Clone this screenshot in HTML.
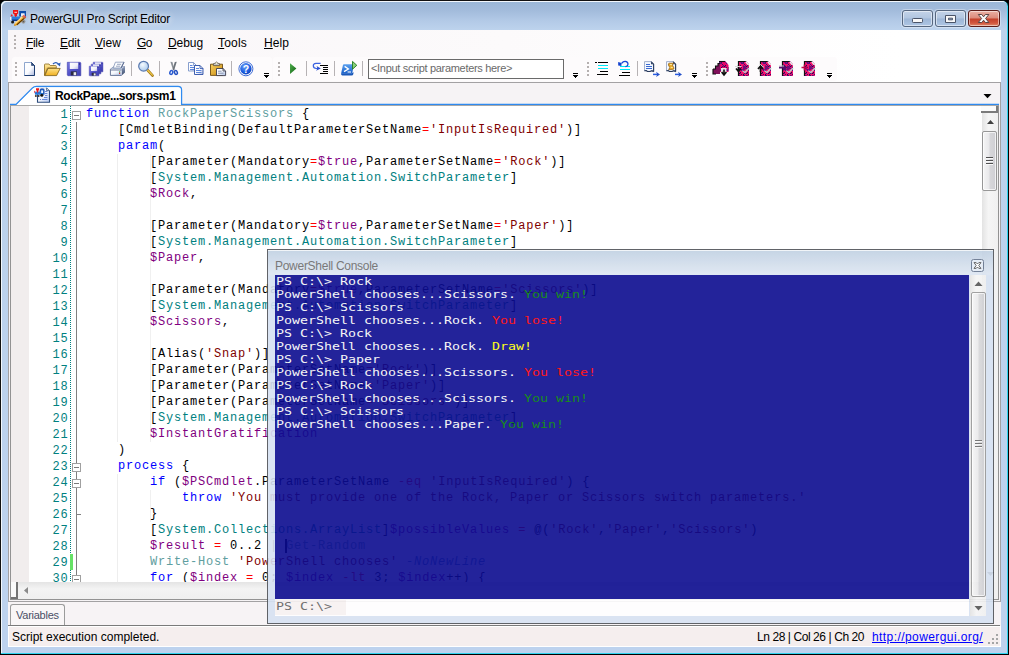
<!DOCTYPE html>
<html><head><meta charset="utf-8"><title>PowerGUI Pro Script Editor</title>
<style>
html,body{margin:0;padding:0;}
body{width:1009px;height:655px;overflow:hidden;position:relative;background:#000;font-family:"Liberation Sans",sans-serif;font-size:12px;color:#000;}
.abs,.abs2>div{position:absolute;}
svg{position:absolute;overflow:visible;}
#winc{position:absolute;left:0;top:0;width:1008px;height:654px;background:#2fd3ee;border-radius:6px 6px 0 0;border-left:1px solid #111;border-top:1px solid #111;box-sizing:border-box;}
#win{position:absolute;left:1px;top:1px;width:1006px;height:652px;border-radius:5px 5px 0 0;background:linear-gradient(#9ab7d7 0px,#a3bcdc 10px,#b3cae7 20px,#bdd3ed 29px,#bcd2ec 60px,#bdd2ee 100%);box-shadow:inset 1px 1px 0 #f2f7fc;}
#title{left:30px;top:11px;text-shadow:0 0 6px rgba(255,255,255,.9),0 0 10px rgba(255,255,255,.6);font-size:12px;line-height:16px;white-space:nowrap;letter-spacing:-0.23px;}
.wb{position:absolute;top:10px;height:15px;border:1px solid #56677f;border-radius:3px;box-shadow:inset 0 0 0 1px rgba(255,255,255,.5),0 0 0 1px rgba(255,255,255,.35);background:linear-gradient(#c3d3e8 0%,#b1c6e0 48%,#9db6d6 52%,#aec6e4 100%);}
#client{left:8px;top:30px;width:993px;height:617px;background:#f7f3f5;}
#mbg{left:8px;top:30px;width:993px;height:52px;background:linear-gradient(90deg,#f9f6f8 0,#fcfafb 50%,#ffffff 90%);}
.menu{position:absolute;top:35px;font-size:12px;line-height:16px;white-space:nowrap;}
.tb{position:absolute;top:57px;height:24px;background:#fdfbfc;border-radius:3px;}
.grip{position:absolute;width:2px;height:18px;background:repeating-linear-gradient(#b5b0b0 0 2px,transparent 2px 4px);}
.sep{position:absolute;top:61px;width:1px;height:15px;background:#b6b2b4;}
.ovf{position:absolute;width:5px;height:1px;background:#000;}
.ovf:after{content:"";position:absolute;left:2px;top:4px;width:1px;height:1px;background:#000;box-shadow:-1px -1px 0 #000,0 -1px 0 #000,1px -1px 0 #000,-2px -2px 0 #000,-1px -2px 0 #000,0 -2px 0 #000,1px -2px 0 #000,2px -2px 0 #000;}
#code{left:86px;top:106px;font-family:"Liberation Mono",monospace;font-size:12px;letter-spacing:0.8px;line-height:16px;white-space:pre;color:#000;}
#nums{left:36px;top:107px;width:32.5px;text-align:right;font-family:"Liberation Mono",monospace;font-size:12px;letter-spacing:0.8px;line-height:16px;color:#008080;white-space:pre;}
.k{color:#0000ff}.t{color:#008080}.f{color:#5f9ea0}.v{color:#800080}.s{color:#800000}.o{color:#ff0000}.p{color:#4682b4;font-style:italic}
.fold{position:absolute;left:72px;width:7px;height:7px;border:1px solid #a0a0a0;background:#fff;}
.fold:after{content:"";position:absolute;left:1px;top:3px;width:5px;height:1px;background:#7a7a7a;}
#con{left:267px;top:249px;width:725px;height:373px;border:1px solid #505358;box-shadow:inset 0 1px 0 rgba(255,255,255,.75);background:linear-gradient(#c0d0e2 0px,#dde6f2 24px,#d7e2f2 26px,#d7e2f2 100%);opacity:0.9;}
#context{left:8px;top:25px;font-family:"DejaVu Sans Mono",monospace;font-size:11px;line-height:13px;white-space:pre;color:#f0f0f0;transform:scaleX(1.208);transform-origin:0 0;}
.cw{color:#f6f6f6}.cg{color:#008000}.cr{color:#ff0000}.cy{color:#ffff00}
.sbtrack{background:linear-gradient(90deg,#e3e3e3,#f5f5f5 40%,#f0f0f0);}
.thumb{border:1px solid #979797;border-radius:2px;background:linear-gradient(90deg,#f5f5f5 0%,#e9e9eb 45%,#d6d6d9 55%,#cfcfd3 100%);box-shadow:inset 0 0 0 1px rgba(255,255,255,.7);}
</style></head><body>
<div id="winc"></div><div id="win"></div>
<svg style="left:6px;top:6px" width="26" height="24" viewBox="6 6 26 24">
<path d="M19.2 11 H26 V18 H24.5 V13.4 H21 V16.4 H19.2 Z" fill="#0c4cac"/>
<path d="M21 13.4 H24.5 V16 H21 Z" fill="#e8f0fa"/>
<path d="M10.8 16.4 H20 V20.4 H12 L10.8 19.4 Z" fill="#2c7cd8"/>
<path d="M11.4 19.4 H19 V21 H13 Z" fill="#0a3694"/>
<path d="M10 17 H11.5 V20 H10 Z" fill="#f0f0f0"/>
<path d="M10.4 16.2 L11.8 13.8 L13 16.2 Z" fill="#e02030"/>
<path d="M13 10 H18.1 V13.4 L17 14.2 V15.8 L15.6 17 L14.4 15.8 V14.2 L13 13.4 Z" fill="#ee1414"/>
<path d="M14.4 11.8 H17 V12.8 H14.4 Z" fill="#ffd8d8"/>
<circle cx="12.6" cy="22" r="1.5" fill="#1c1c1c"/>
<circle cx="23.4" cy="21.6" r="2.1" fill="#9a9a9a"/><circle cx="23.4" cy="21.6" r="0.9" fill="#5a5a5a"/>
<path d="M14.2 25.8 L14.9 22.9 L23.6 14.9 L26 17.4 L17.2 25.3 Z" fill="#f4b030"/>
<path d="M14.9 22.9 L23.6 14.9 L24.4 15.7 L15.6 23.7 Z" fill="#ffe098"/>
<path d="M16.3 24.5 L25.2 16.5 L26 17.4 L17.2 25.3 Z" fill="#5a3400"/>
<path d="M22.6 15.9 L23.9 14.7 L26.2 17.1 L25 18.3 Z" fill="#e85858"/>
<path d="M21.8 16.6 L22.6 15.9 L25 18.3 L24.2 19 Z" fill="#c08040"/>
<path d="M14.2 25.8 L14.6 24 L15.9 25.4 Z" fill="#c87800"/>
</svg>
<div id="title" class="abs">PowerGUI Pro Script Editor</div>
<!-- window buttons -->
<div class="wb" style="left:902px;width:29px;"></div>
<div class="wb" style="left:935px;width:29px;"></div>
<div class="wb" style="left:968px;width:30px;border-color:#5c1c18;background:linear-gradient(#eab0a4 0%,#dc8a7a 48%,#c4402a 52%,#d2563e 80%,#e08a6a 100%);"></div>
<svg style="left:900px;top:8px" width="102" height="22" viewBox="900 8 102 22">
<rect x="912.5" y="18.5" width="10" height="4" rx="0.8" fill="#f8f8f8" stroke="#4a5468" stroke-width="1"/>
<path d="M945.5 15.5 H955.5 V22.5 H945.5 Z M948.5 18.2 V19.8 H952.5 V18.2 Z" fill="#f8f8f8" fill-rule="evenodd" stroke="#4a5468" stroke-width="1"/>
<path d="M978.3 14.5 H981.8 L983.6 16.8 L985.4 14.5 H988.9 L985.6 18.5 L988.9 22.5 H985.4 L983.6 20.2 L981.8 22.5 H978.3 L981.6 18.5 Z" fill="#f8f8f8" stroke="#5a4444" stroke-width="1"/>
</svg>

<div id="client" class="abs"></div><div id="mbg" class="abs"></div>
<!-- menubar -->
<div class="grip" style="left:14px;top:35px;height:16px"></div>
<div class="menu" style="left:26px;letter-spacing:-0.34px"><u>F</u>ile</div>
<div class="menu" style="left:60px;letter-spacing:-0.17px"><u>E</u>dit</div>
<div class="menu" style="left:95px;letter-spacing:0.05px"><u>V</u>iew</div>
<div class="menu" style="left:137px;letter-spacing:-0.5px"><u>G</u>o</div>
<div class="menu" style="left:168px;letter-spacing:-0.07px"><u>D</u>ebug</div>
<div class="menu" style="left:218px;letter-spacing:0.2px"><u>T</u>ools</div>
<div class="menu" style="left:264px;letter-spacing:0.08px"><u>H</u>elp</div>
<!-- toolbars -->
<div class="tb" style="left:12px;width:260px"></div>
<div class="tb" style="left:273px;width:310px"></div>
<div class="tb" style="left:584px;width:120px"></div>
<div class="tb" style="left:705px;width:132px"></div>
<div class="grip" style="left:15px;top:62px;height:16px"></div>
<div class="grip" style="left:278px;top:62px;height:16px"></div>
<div class="grip" style="left:587px;top:62px;height:16px"></div>
<div class="grip" style="left:706px;top:62px;height:16px"></div>
<div class="sep" style="left:131px"></div><div class="sep" style="left:159px"></div><div class="sep" style="left:231px"></div>
<div class="sep" style="left:306px"></div><div class="sep" style="left:334px"></div><div class="sep" style="left:362px"></div>
<div class="sep" style="left:637px"></div>
<div class="ovf" style="left:264px;top:73px"></div>
<div class="ovf" style="left:573px;top:73px"></div>
<div class="ovf" style="left:692px;top:73px"></div>
<div class="ovf" style="left:827px;top:73px"></div>
<svg style="left:0;top:0" width="1009" height="84" viewBox="0 0 1009 84">
<defs>
<linearGradient id="gfl" x1="0" y1="0" x2="1" y2="1"><stop offset="0" stop-color="#7a7ae0"/><stop offset="0.5" stop-color="#5050c8"/><stop offset="1" stop-color="#4040b0"/></linearGradient>
<linearGradient id="glab" x1="0" y1="0" x2="1" y2="1"><stop offset="0" stop-color="#ffffff"/><stop offset="0.6" stop-color="#f0f0fa"/><stop offset="1" stop-color="#b8b8e0"/></linearGradient>
<linearGradient id="gpage" x1="0" y1="0" x2="1" y2="1"><stop offset="0" stop-color="#ffffff"/><stop offset="0.55" stop-color="#fafbff"/><stop offset="1" stop-color="#a9b6dc"/></linearGradient>
<linearGradient id="gfold" x1="0" y1="0" x2="0" y2="1"><stop offset="0" stop-color="#ffe9a0"/><stop offset="1" stop-color="#e8a818"/></linearGradient>
<linearGradient id="gfold2" x1="0" y1="0" x2="0" y2="1"><stop offset="0" stop-color="#ffe28a"/><stop offset="1" stop-color="#f0b020"/></linearGradient>
<linearGradient id="gprn" x1="0" y1="0" x2="1" y2="1"><stop offset="0" stop-color="#ffffff"/><stop offset="0.45" stop-color="#f6f8fc"/><stop offset="1" stop-color="#a8bce4"/></linearGradient>
<linearGradient id="gprs" x1="0" y1="0" x2="0" y2="1"><stop offset="0" stop-color="#8a9aba"/><stop offset="1" stop-color="#3c4c6c"/></linearGradient>
<radialGradient id="glens" cx="0.4" cy="0.35" r="0.7"><stop offset="0" stop-color="#f4faff"/><stop offset="1" stop-color="#a8c8ec"/></radialGradient>
<radialGradient id="ghelp" cx="0.4" cy="0.3" r="0.8"><stop offset="0" stop-color="#6aa0f8"/><stop offset="0.6" stop-color="#1c5ce0"/><stop offset="1" stop-color="#0a3cb0"/></radialGradient>
<linearGradient id="gplay" x1="0" y1="0" x2="1" y2="1"><stop offset="0" stop-color="#50b050"/><stop offset="1" stop-color="#106010"/></linearGradient>
<linearGradient id="gps" x1="0" y1="0" x2="0" y2="1"><stop offset="0" stop-color="#5aa0f0"/><stop offset="1" stop-color="#1a60c8"/></linearGradient>
<linearGradient id="gclip" x1="0" y1="0" x2="1" y2="1"><stop offset="0" stop-color="#f8d060"/><stop offset="1" stop-color="#c88a10"/></linearGradient>
<pattern id="chk" width="7" height="7" patternUnits="userSpaceOnUse"><rect x="1" y="0" width="1" height="1" fill="#40106a"/><rect x="2" y="0" width="1" height="1" fill="#40106a"/><rect x="4" y="0" width="1" height="1" fill="#5a1080"/><rect x="5" y="0" width="1" height="1" fill="#901078"/><rect x="0" y="1" width="1" height="1" fill="#901078"/><rect x="1" y="1" width="1" height="1" fill="#40106a"/><rect x="5" y="1" width="1" height="1" fill="#901078"/><rect x="6" y="1" width="1" height="1" fill="#5a1080"/><rect x="0" y="2" width="1" height="1" fill="#5a1080"/><rect x="1" y="2" width="1" height="1" fill="#5a1080"/><rect x="6" y="2" width="1" height="1" fill="#5a1080"/><rect x="2" y="3" width="1" height="1" fill="#40106a"/><rect x="3" y="4" width="1" height="1" fill="#5a1080"/><rect x="5" y="4" width="1" height="1" fill="#2a0a50"/><rect x="2" y="5" width="1" height="1" fill="#40106a"/><rect x="3" y="5" width="1" height="1" fill="#901078"/><rect x="4" y="5" width="1" height="1" fill="#2a0a50"/><rect x="5" y="5" width="1" height="1" fill="#901078"/><rect x="1" y="6" width="1" height="1" fill="#2a0a50"/><rect x="6" y="6" width="1" height="1" fill="#40106a"/></pattern>
</defs>

<path d="M24.5 62.5 H31.5 L34.5 65.5 V75.5 H24.5 Z" fill="url(#gpage)" stroke="#8ea6ce" stroke-width="1"/><path d="M31.5 62.5 L34.5 65.5 V75.5 H24.5" fill="none" stroke="#1e3c70" stroke-width="1"/><path d="M31.5 62.5 V65.5 H34.5 Z" fill="#35507e" stroke="#1e3c70" stroke-width="0.6"/>
<path d="M44.5 75.5 V64.8 Q44.5 64 45.3 64 H49 L50.2 65.5 H55.5 Q56.3 65.5 56.3 66.3 V68 H47.5 Z" fill="url(#gfold)" stroke="#8a6a20" stroke-width="0.8"/>
<path d="M44.8 75.6 L48 68.4 H60.2 L56.6 75.6 Z" fill="url(#gfold2)" stroke="#7a5a10" stroke-width="0.8"/>
<path d="M53 64 Q56 60.8 59 64.6" fill="none" stroke="#2a5cb8" stroke-width="1.3"/><path d="M57.2 64.2 L60.6 62.6 L60 66.6 Z" fill="#2a5cb8"/>
<g transform="translate(67,62) scale(1.0)">
<path d="M0.3 0.3 H13.2 L13.8 0.9 V13.7 H0.9 L0.3 13.1 Z" fill="url(#gfl)" stroke="#3a3aa8" stroke-width="0.6"/>
<rect x="2.8" y="0.6" width="8.4" height="6.4" fill="url(#glab)"/>
<rect x="3.8" y="9.4" width="6" height="4" fill="#2a2a40"/>
<rect x="6.6" y="10.2" width="2.6" height="3" fill="#e8e8f0"/>
<rect x="12" y="1.4" width="0.9" height="1.2" fill="#20206a"/>
</g>
<g transform="translate(93,62) scale(0.72)">
<path d="M0.3 0.3 H13.2 L13.8 0.9 V13.7 H0.9 L0.3 13.1 Z" fill="url(#gfl)" stroke="#3a3aa8" stroke-width="0.6"/>
<rect x="2.8" y="0.6" width="8.4" height="6.4" fill="url(#glab)"/>
<rect x="3.8" y="9.4" width="6" height="4" fill="#2a2a40"/>
<rect x="6.6" y="10.2" width="2.6" height="3" fill="#e8e8f0"/>
<rect x="12" y="1.4" width="0.9" height="1.2" fill="#20206a"/>
</g><g transform="translate(91,64) scale(0.72)">
<path d="M0.3 0.3 H13.2 L13.8 0.9 V13.7 H0.9 L0.3 13.1 Z" fill="url(#gfl)" stroke="#3a3aa8" stroke-width="0.6"/>
<rect x="2.8" y="0.6" width="8.4" height="6.4" fill="url(#glab)"/>
<rect x="3.8" y="9.4" width="6" height="4" fill="#2a2a40"/>
<rect x="6.6" y="10.2" width="2.6" height="3" fill="#e8e8f0"/>
<rect x="12" y="1.4" width="0.9" height="1.2" fill="#20206a"/>
</g><g transform="translate(89,66) scale(0.72)">
<path d="M0.3 0.3 H13.2 L13.8 0.9 V13.7 H0.9 L0.3 13.1 Z" fill="url(#gfl)" stroke="#3a3aa8" stroke-width="0.6"/>
<rect x="2.8" y="0.6" width="8.4" height="6.4" fill="url(#glab)"/>
<rect x="3.8" y="9.4" width="6" height="4" fill="#2a2a40"/>
<rect x="6.6" y="10.2" width="2.6" height="3" fill="#e8e8f0"/>
<rect x="12" y="1.4" width="0.9" height="1.2" fill="#20206a"/>
</g>
<path d="M110.4 69.2 L113.6 66.6 H125 L121.6 69.2 Z" fill="#c4cee2" stroke="#7484a8" stroke-width="0.6"/>
<path d="M115.4 62.2 H124 L121 68 H113.2 Z" fill="#fbfcfe" stroke="#8494b6" stroke-width="0.8"/><path d="M124 62.2 L121 68" stroke="#55658a" stroke-width="1"/><path d="M117 64.3 H121.2 M116 66.2 H120.2" stroke="#8e9cba" stroke-width="0.9"/>
<path d="M121.6 69.2 L125 66.4 V72.4 L121.6 75.6 Z" fill="url(#gprs)"/>
<rect x="110.4" y="69.2" width="11.2" height="6.4" fill="url(#gprn)"/><path d="M110.4 69.2 V75.4 H121.6" fill="none" stroke="#5a6a8c" stroke-width="0.9"/><path d="M110.6 70 H121.6" stroke="#5e6e90" stroke-width="0.9"/><rect x="119" y="71.4" width="1.2" height="1.2" fill="#20a030"/><rect x="119" y="72.7" width="1.2" height="1.2" fill="#d82020"/>
<path d="M147.5 70 L152.6 75.6" stroke="#a07818" stroke-width="2.6" stroke-linecap="round"/><path d="M147.5 70 L152.4 75.2" stroke="#f0c848" stroke-width="1.2" stroke-linecap="round"/><circle cx="143.6" cy="66.2" r="4.9" fill="url(#glens)" stroke="#5a7ab0" stroke-width="1.2"/>
<path d="M170.4 61.8 L172.4 62 L174.6 69.6 L173.2 70.4 Z" fill="#8a9098"/><path d="M176.8 61.8 L174.8 62 L172.6 69.6 L174 70.4 Z" fill="#6c727a"/>
<ellipse cx="171.3" cy="72.5" rx="1.4" ry="2" transform="rotate(20 171.3 72.5)" fill="#f0f4ff" stroke="#2a5ad0" stroke-width="1.5"/><ellipse cx="175.9" cy="72.5" rx="1.4" ry="2" transform="rotate(-20 175.9 72.5)" fill="#f0f4ff" stroke="#2450c0" stroke-width="1.5"/>
<path d="M188.5 62.5 H193.5 L196.5 65.5 V71.0 H188.5 Z" fill="url(#gpage)" stroke="#7a94c8" stroke-width="0.9"/><path d="M193.5 62.5 V65.5 H196.5" fill="none" stroke="#7a94c8" stroke-width="0.8"/><path d="M190 65.5 H192.5 M190 67.5 H195 M190 69.5 H195" stroke="#4a78d8" stroke-width="0.9"/><path d="M194.5 65.5 H200.0 L203.0 68.5 V74.5 H194.5 Z" fill="url(#gpage)" stroke="#2c50a8" stroke-width="0.9"/><path d="M200.0 65.5 V68.5 H203.0" fill="none" stroke="#2c50a8" stroke-width="0.8"/><path d="M196 68.5 H199.0 M196 70.5 H201.5 M196 72.5 H201.5" stroke="#4a78d8" stroke-width="0.9"/>
<path d="M210.5 64.2 H222.5 V75.4 H210.5 Z" fill="url(#gclip)" stroke="#6e4c10" stroke-width="0.9"/><path d="M213.4 65.6 V64 Q213.4 63.4 214.2 63.4 H215 Q216.5 60.6 218 63.4 H218.8 Q219.6 63.4 219.6 64 V65.6 Z" fill="#c8c8c8" stroke="#5a5040" stroke-width="0.8"/><circle cx="216.5" cy="63.3" r="0.7" fill="#fff8d0"/>
<path d="M216.5 68.5 H223 L225.6 71 V75.6 H216.5 Z" fill="url(#gprn)" stroke="#3c3c4c" stroke-width="0.9"/><path d="M223 68.5 V71 H225.6" fill="none" stroke="#3c3c4c" stroke-width="0.8"/><path d="M218 71.2 H221.6 M218 73.2 H223.6" stroke="#7a88a8" stroke-width="0.9"/>
<circle cx="245.9" cy="68.8" r="7" fill="#fff" stroke="#2a5cd0" stroke-width="0.9"/><circle cx="245.9" cy="68.8" r="5.7" fill="url(#ghelp)"/><text x="245.9" y="72.6" font-family="Liberation Sans, sans-serif" font-weight="bold" font-size="10.5" fill="#fff" text-anchor="middle">?</text>
<path d="M290 63.2 L296.4 68.6 L290 74 Z" fill="url(#gplay)"/>
<path d="M320.6 63.4 H316 Q313.2 63.6 313.3 65.8 Q313.4 68.4 316.4 68.5 H318" fill="none" stroke="#3a62e0" stroke-width="1.2"/><path d="M316.6 66 L320.8 68.4 L316 70.8 L317.4 68.4 Z" fill="#2a50d0"/>
<path d="M320 65.5 H328 M323 67.5 H328 M323 69.5 H328 M323 71.5 H328 M320 73.5 H328" stroke="#000" stroke-width="1"/>
<path d="M341 73.2 L352 73.2 L353.4 72 V74 Q353 75.6 351.4 75.6 H342.4 Q341 75.4 341 73.2 Z" fill="#1a58b8"/>
<path d="M344 64.3 H353 Q354 64.3 353.8 65.3 L352.4 72.6 Q352.2 73.5 351.2 73.5 H342 Q341 73.5 341.3 72.5 L342.9 65.2 Q343.1 64.3 344 64.3 Z" fill="url(#gps)"/>
<path d="M344.6 66.4 L348.4 69 L344 71.6" fill="none" stroke="#fff" stroke-width="1.3"/><path d="M347.6 72 H351" stroke="#fff" stroke-width="1.1"/>
<path d="M352.5 61.4 L356.8 65.3 L352.5 69.2 Z" fill="#8ad078" stroke="#1e7a1e" stroke-width="0.9"/>
<path d="M595 62.5 H597 M598 62.5 H608 M600 71.5 H608 M597 74.5 H608" stroke="#000" stroke-width="1"/><path d="M598 65.5 H608 M598 68.5 H608" stroke="#00e8f8" stroke-width="1"/>
<path d="M622 72.5 H630 M619 75.5 H630" stroke="#000" stroke-width="1"/><path d="M620 66.5 H630 M620 69.5 H630" stroke="#00e8f8" stroke-width="1"/><path d="M621.6 63.4 Q623 61.2 625.2 61.3 Q628 61.6 628 64 Q627.8 66.4 625.4 66.6" fill="none" stroke="#1848d8" stroke-width="1.2"/><path d="M618.2 62 L621.6 63 L621.4 66 L618.2 65.6 Z" fill="#1040d0"/>
<path d="M644.5 61.6 H651 L653.6 64.2 V71.6 L652 70.6 L650 71.4 L647.4 71.4 L646.2 70.4 L644.5 70.8 Z" fill="#f4f8ff" stroke="#9aa8c6" stroke-width="0.9"/><path d="M651 61.6 L653.6 64.2 V71.8 M644.4 70.7 L646.2 70.5 L647.4 71.5 H650 L652 70.7 L653.6 71.8" fill="none" stroke="#2a3c5e" stroke-width="1.1"/><path d="M651 61.8 V64.2 H653.4 Z" fill="#34466a"/><path d="M646 64.5 H650 M646 66.5 H652 M646 68.5 H652" stroke="#3a68d0" stroke-width="1"/><path d="M653 74.4 H658" stroke="#2a5ce0" stroke-width="1.5"/><path d="M656 71.8 L660 74.4 L656 77 L657.2 74.4 Z" fill="#2450c8"/><path d="M666.5 61.6 H673 L675.6 64.2 V71.6 L674 70.6 L672 71.4 L669.4 71.4 L668.2 70.4 L666.5 70.8 Z" fill="#f4f8ff" stroke="#9aa8c6" stroke-width="0.9"/><path d="M673 61.6 L675.6 64.2 V71.8 M666.4 70.7 L668.2 70.5 L669.4 71.5 H672 L674 70.7 L675.6 71.8" fill="none" stroke="#2a3c5e" stroke-width="1.1"/><path d="M673 61.8 V64.2 H675.4 Z" fill="#34466a"/><path d="M669.2 63.2 H673.6 L672.4 65 L674 68 Q674 69.6 672.4 69.6 H668.6 L669.8 67.6 L668.4 65 Q668.2 63.2 669.2 63.2 Z" fill="#e8a828" stroke="#8a5a10" stroke-width="0.7"/><path d="M670 64.6 H672 M670.6 67.4 H672.8" stroke="#fff0b0" stroke-width="0.9"/><path d="M675 74.4 H680" stroke="#2a5ce0" stroke-width="1.5"/><path d="M678 71.8 L682 74.4 L678 77 L679.2 74.4 Z" fill="#2450c8"/>
<g transform="translate(713,61)"><path d="M6 0 H12 L15.5 4 V11 H6 Z" fill="#e80868"/><path d="M6 0 H12 L15.5 4 V11 H6 Z" fill="url(#chk)"/><path d="M0 8 H2.5 V5 H5 V2.5 H7 V13 H0 Z" fill="#80105a"/><path d="M0 8 H2.5 V5 H5 V2.5 H7 M0 8 V13 H3" stroke="#101010" stroke-width="1.1" fill="none"/><path d="M6 0.5 H12" stroke="#101010" stroke-width="1.1"/><rect x="8" y="7" width="5.5" height="4" fill="#e8e8e8"/><path d="M11 8.5 V13 M8.6 11 L11 14 L13.4 11" stroke="#101010" stroke-width="1.6" fill="none"/></g>
<g transform="translate(735,61)"><path d="M3 0 H11 L14 3.5 V15 H3 Z" fill="#f4106c"/><path d="M3 0 H11 L14 3.5 V15 H3 Z" fill="url(#chk)"/><path d="M3 0.5 H11 M3.5 0 V15" stroke="#101010" stroke-width="1.2" fill="none"/><path d="M11 0 L14.2 3.6 L13 4.5 L10.4 1.5Z" fill="#e8e8e8"/><path d="M7.5 9.5 L10 11.5 L14 7" stroke="#c8c8c8" stroke-width="1.6" fill="none"/><path d="M8 4 L12 7 L8 10 Z" fill="#70107a"/><path d="M3.5 4.5 V9.5 M1 7.5 L3.5 10.5 L6 7.5" stroke="#101010" stroke-width="1.6" fill="none"/><path d="M0 5.5 H6.5" stroke="#d8d8d8" stroke-width="1"/></g><g transform="translate(757,61)"><path d="M3 0 H11 L14 3.5 V15 H3 Z" fill="#f4106c"/><path d="M3 0 H11 L14 3.5 V15 H3 Z" fill="url(#chk)"/><path d="M3 0.5 H11 M3.5 0 V15" stroke="#101010" stroke-width="1.2" fill="none"/><path d="M11 0 L14.2 3.6 L13 4.5 L10.4 1.5Z" fill="#e8e8e8"/><path d="M7.5 9.5 L10 11.5 L14 7" stroke="#c8c8c8" stroke-width="1.6" fill="none"/><path d="M8 4 L12 7 L8 10 Z" fill="#70107a"/><path d="M3.5 11 V6 M1 8 L3.5 5 L6 8" stroke="#101010" stroke-width="1.6" fill="none"/><path d="M0 6.5 L3.5 3.5 L7 6.5" stroke="#e8e8e8" stroke-width="1" fill="none"/></g><g transform="translate(779,61)"><path d="M3 0 H11 L14 3.5 V15 H3 Z" fill="#f4106c"/><path d="M3 0 H11 L14 3.5 V15 H3 Z" fill="url(#chk)"/><path d="M3 0.5 H11 M3.5 0 V15" stroke="#101010" stroke-width="1.2" fill="none"/><path d="M11 0 L14.2 3.6 L13 4.5 L10.4 1.5Z" fill="#e8e8e8"/><path d="M7.5 9.5 L10 11.5 L14 7" stroke="#c8c8c8" stroke-width="1.6" fill="none"/><path d="M8 4 L12 7 L8 10 Z" fill="#70107a"/><path d="M0 6.5 H6 M4 4 L7 6.5 L4 9" stroke="#50106a" stroke-width="1.8" fill="none"/><path d="M0 5 H5" stroke="#c8c8c8" stroke-width="1"/></g><g transform="translate(801,61)"><path d="M3 0 H11 L14 3.5 V15 H3 Z" fill="#f4106c"/><path d="M3 0 H11 L14 3.5 V15 H3 Z" fill="url(#chk)"/><path d="M3 0.5 H11 M3.5 0 V15" stroke="#101010" stroke-width="1.2" fill="none"/><path d="M11 0 L14.2 3.6 L13 4.5 L10.4 1.5Z" fill="#e8e8e8"/><path d="M7.5 9.5 L10 11.5 L14 7" stroke="#c8c8c8" stroke-width="1.6" fill="none"/><path d="M8 4 L12 7 L8 10 Z" fill="#70107a"/><path d="M0.5 6.5 H6.5 M3.5 3.5 V9.5" stroke="#c00048" stroke-width="1.6" fill="none"/></g>
</svg>
<div class="abs" style="left:368px;top:59px;width:194px;height:18px;border:1px solid #6a6a6a;background:#fff;"></div>
<div class="abs" style="left:371px;top:61px;font-size:11px;line-height:15px;color:#6a6a6a;white-space:nowrap;letter-spacing:-0.31px;">&lt;Input script parameters here&gt;</div>
<div class="abs" style="left:8px;top:82px;width:993px;height:520px;border:1px solid #a3a1a3;box-sizing:border-box;background:#f6f3f5;"></div>
<!-- tab strip -->

<svg style="left:0;top:83px" width="1009" height="24" viewBox="0 83 1009 24">
<path d="M10 104.5 L16 104.5 L32.5 88 Q34 86.5 36.5 86.5 L178 86.5 Q181.5 86.5 181.5 90 L181.5 104.5 L999 104.5" fill="none" stroke="#2f8af0" stroke-width="1.4"/>
<path d="M16.5 105 L33 88.5 Q34.5 87.2 36.5 87.2 L178 87.2 Q180.8 87.2 180.8 90 L180.8 105 Z" fill="#ffffff"/>
<path d="M983.5 94 L991.5 94 L987.5 98.2 Z" fill="#000"/>
</svg>
<svg style="left:30px;top:84px" width="30" height="22" viewBox="30 84 30 22">
<defs><linearGradient id="gtp" x1="0" y1="0" x2="1" y2="1"><stop offset="0" stop-color="#ffffff"/><stop offset="0.5" stop-color="#f4f7fe"/><stop offset="1" stop-color="#b4c8f4"/></linearGradient></defs>
<path d="M37.5 87.8 H46.6 L49.4 90.6 V102.2 H37.5 Z" fill="url(#gtp)"/>
<path d="M37.5 92 V102.3 H49.5 V90.4" fill="none" stroke="#2c4c7c" stroke-width="1.1"/>
<path d="M37.5 88 H46.5" stroke="#c8d2e4" stroke-width="0.8"/>
<path d="M46.6 87.8 V90.6 H49.4 Z" fill="#e8eefa" stroke="#34507e" stroke-width="0.8"/>
<path d="M45 91.5 H47.4 M45 93.5 H47.4 M45 95.5 H47.4 M44 97.5 H47.4 M42 99.5 H47.4 M40 99.5 H41" stroke="#5a7ed8" stroke-width="0.9"/>
<path d="M34.8 92.6 L36 91.6 H40.2 V89.8 Q40.2 89 41 89 H43.2 Q44 89 44 89.8 V94.8 H35 Z" fill="#2a78d8"/>
<path d="M40.2 91.6 V89.8 Q40.2 89 41 89 H43.2 Q44 89 44 89.8 V94.6" fill="none" stroke="#0a3aa0" stroke-width="1"/>
<rect x="41.2" y="90.4" width="1.9" height="2.6" fill="#f4f8ff"/>
<path d="M34.2 90.6 L35.6 91.8 L34.2 93.2 Z" fill="#e03040"/>
<path d="M36 88.2 H39 V90.4 H38.2 V92.4 H36.9 V90.4 H36 Z" fill="#f01818"/>
<circle cx="35.9" cy="96" r="1" fill="#3a3026"/><circle cx="38.6" cy="96" r="1" fill="#3a3026"/><circle cx="41.8" cy="95.2" r="1.5" fill="#141414"/>
</svg>
<div class="abs" style="left:55px;top:88px;font-size:12px;font-weight:bold;line-height:16px;white-space:nowrap;letter-spacing:-0.38px;">RockPape...sors.psm1</div>
<!-- editor -->
<div class="abs" style="left:10px;top:105px;width:989px;height:495px;border:1px solid #929292;border-top-color:#a8a8a8;box-sizing:border-box;background:#fff;"></div>
<div class="abs" style="left:11px;top:106px;width:18px;height:476px;background:#f1eded;"></div>
<div class="abs" style="left:70px;top:106px;width:1px;height:476px;background:repeating-linear-gradient(#008080 0 1px,transparent 1px 2px);"></div>
<div class="abs" style="left:76px;top:122px;width:1px;height:460px;background:#808080;"></div>
<div class="abs" style="left:76px;top:514px;width:5px;height:1px;background:#808080;"></div>
<div class="fold" style="top:111px"></div><div class="fold" style="top:463px"></div><div class="fold" style="top:479px"></div><div class="fold" style="top:575px"></div>
<div class="abs" style="left:70px;top:554px;width:3px;height:16px;background:#66e266;"></div>
<!-- indent guides -->
<div class="abs" style="left:117px;top:154px;width:1px;height:288px;background:#eeeeee;"></div><div class="abs" style="left:117px;top:474px;width:1px;height:108px;background:#eeeeee;"></div>
<div class="abs" style="left:150px;top:154px;width:1px;height:288px;background:#f0f0f0;"></div>
<div class="abs" style="left:150px;top:490px;width:1px;height:32px;background:#f0f0f0;"></div>
<div id="nums" class="abs">1
2
3
4
5
6
7
8
9
10
11
12
13
14
15
16
17
18
19
20
21
22
23
24
25
26
27
28
29
30</div>
<div id="code" class="abs"><span class="k">function</span> <span class="f">RockPaperScissors</span> {
    [CmdletBinding(DefaultParameterSetName<span class="o">=</span><span class="s">'InputIsRequired'</span>)]
    <span class="k">param</span>(
        [Parameter(Mandatory<span class="o">=</span><span class="v">$true</span>,ParameterSetName<span class="o">=</span><span class="s">'Rock'</span>)]
        [<span class="t">System.Management.Automation.SwitchParameter</span>]
        <span class="v">$Rock</span>,

        [Parameter(Mandatory<span class="o">=</span><span class="v">$true</span>,ParameterSetName<span class="o">=</span><span class="s">'Paper'</span>)]
        [<span class="t">System.Management.Automation.SwitchParameter</span>]
        <span class="v">$Paper</span>,

        [Parameter(Mandatory<span class="o">=</span><span class="v">$true</span>,ParameterSetName<span class="o">=</span><span class="s">'Scissors'</span>)]
        [<span class="t">System.Management.Automation.SwitchParameter</span>]
        <span class="v">$Scissors</span>,

        [Alias(<span class="s">'Snap'</span>)]
        [Parameter(ParameterSetName<span class="o">=</span><span class="s">'Rock'</span>)]
        [Parameter(ParameterSetName<span class="o">=</span><span class="s">'Paper'</span>)]
        [Parameter(ParameterSetName<span class="o">=</span><span class="s">'Scissors'</span>)]
        [<span class="t">System.Management.Automation.SwitchParameter</span>]
        <span class="v">$InstantGratification</span>
    )
    <span class="k">process</span> {
        <span class="k">if</span> (<span class="v">$PSCmdlet</span>.ParameterSetName <span class="o">-eq</span> <span class="s">'InputIsRequired'</span>) {
            <span class="k">throw</span> <span class="s">'You must provide one of the Rock, Paper or Scissors switch parameters.'</span>
        }
        [<span class="t">System.Collections.ArrayList</span>]<span class="v">$possibleValues</span> <span class="o">=</span> @(<span class="s">'Rock'</span>,<span class="s">'Paper'</span>,<span class="s">'Scissors'</span>)
        <span class="v">$result</span> <span class="o">=</span> 0..2 | <span class="f">Get-Random</span>
        <span class="f">Write-Host</span> <span class="s">'PowerShell chooses'</span> <span class="p">-NoNewLine</span>
        <span class="k">for</span> (<span class="v">$index</span> <span class="o">=</span> 0; <span class="v">$index</span> <span class="o">-lt</span> 3; <span class="v">$index</span>++) {</div>
<div class="abs" style="left:285px;top:539px;width:2px;height:14px;background:#000;"></div>
<!-- editor h scrollbar -->
<div class="abs" style="left:11px;top:582px;width:969px;height:17px;background:linear-gradient(#e4e4e4,#f3f3f3 40%,#efefef);"></div>
<div class="abs" style="left:11px;top:582px;width:7px;height:17px;border:2px solid #747474;border-left:0;border-top:0;background:#fafafa;box-sizing:border-box;"></div>
<svg style="left:24px;top:587px" width="4" height="7" viewBox="0 0 4 7"><path d="M4 0 L0 3.5 L4 7 Z" fill="#8a8a8a"/></svg>
<!-- editor v scrollbar -->
<div class="abs sbtrack" style="left:982px;top:106px;width:16px;height:476px;"></div>
<div class="abs" style="left:981px;top:106px;width:17px;height:7px;border:2px solid #7b7b7b;border-top:0;border-left:0;background:#fbfbfb;box-sizing:border-box;"></div>
<svg style="left:987px;top:120px" width="7" height="4" viewBox="0 0 7 4"><path d="M0 4 L3.5 0 L7 4 Z" fill="#404040"/></svg>
<div class="abs thumb" style="left:982px;top:131px;width:13px;height:58px;"></div>
<div class="abs" style="left:986px;top:157px;width:7px;height:9px;background:repeating-linear-gradient(#505050 0 1px,#fafafa 1px 2px,transparent 2px 3px);"></div>
<svg style="left:987px;top:572px" width="7" height="4" viewBox="0 0 7 4"><path d="M0 0 L3.5 4 L7 0 Z" fill="#404040"/></svg>
<div class="abs" style="left:982px;top:582px;width:16px;height:17px;background:#f0f0f0;"></div>
<!-- bottom tabs -->
<div class="abs" style="left:10px;top:604px;width:55px;height:22px;border:1px solid #9b9b9b;border-bottom:0;border-radius:3px 3px 0 0;background:#f9f6f7;box-sizing:border-box;"></div>
<div class="abs" style="left:16px;top:607px;font-size:11px;line-height:16px;color:#4b4f66;letter-spacing:-0.25px;">Variables</div>
<!-- status bar -->
<div class="abs" style="left:8px;top:625px;width:992px;height:1px;background:#7a7a7a;"></div>
<div class="abs" style="left:8px;top:626px;width:993px;height:21px;background:#f5eeee;border:1px solid #fff;box-sizing:border-box;"></div>
<div class="abs" style="left:12px;top:629px;font-size:12px;line-height:16px;white-space:nowrap;">Script execution completed.</div>
<div class="abs" style="left:757px;top:629px;font-size:12px;line-height:16px;white-space:nowrap;letter-spacing:-0.42px;">Ln 28 | Col 26 | Ch 20</div>
<div class="abs" style="left:872px;top:629px;font-size:12px;line-height:16px;white-space:nowrap;color:#0000ff;text-decoration:underline;letter-spacing:0.42px;">http://powergui.org/</div>
<svg style="left:988px;top:633px" width="12" height="12" viewBox="0 0 12 12"><g fill="#a5a5a5"><rect x="8" y="1" width="2" height="2"/><rect x="4" y="5" width="2" height="2"/><rect x="8" y="5" width="2" height="2"/><rect x="0" y="9" width="2" height="2"/><rect x="4" y="9" width="2" height="2"/><rect x="8" y="9" width="2" height="2"/></g></svg>
<!-- console -->
<div id="con" class="abs abs2">
 <div style="left:7px;top:8px;font-size:12px;line-height:16px;color:#6b6b6b;white-space:nowrap;letter-spacing:-0.28px;">PowerShell Console</div>
 <div style="left:703px;top:9px;width:11px;height:11px;border:1px solid #66758e;border-radius:2.5px;background:#e4ecf6;"></div>
 <svg style="left:705px;top:11px" width="9" height="9" viewBox="0 0 9 9"><path d="M1 1.6 H3.2 L4.5 3 L5.8 1.6 H8 L5.8 4.5 L8 7.4 H5.8 L4.5 6 L3.2 7.4 H1 L3.2 4.5 Z" fill="#fdfdfd" stroke="#454545" stroke-width="0.9"/></svg>
 <div style="left:7px;top:25px;width:694px;height:324px;background:#0c0c90;"></div>
 <div style="left:7px;top:349px;width:694px;height:17px;background:#fff;"></div>
 <div style="left:7px;top:350px;width:71px;height:15px;background:#f8f2f2;"></div>
 <div id="context"><span class="cw">PS C:\&gt; Rock</span>
<span class="cw">PowerShell chooses...Scissors. </span><span class="cg">You win!</span>
<span class="cw">PS C:\&gt; Scissors</span>
<span class="cw">PowerShell chooses...Rock. </span><span class="cr">You lose!</span>
<span class="cw">PS C:\&gt; Rock</span>
<span class="cw">PowerShell chooses...Rock. </span><span class="cy">Draw!</span>
<span class="cw">PS C:\&gt; Paper</span>
<span class="cw">PowerShell chooses...Scissors. </span><span class="cr">You lose!</span>
<span class="cw">PS C:\&gt; Rock</span>
<span class="cw">PowerShell chooses...Scissors. </span><span class="cg">You win!</span>
<span class="cw">PS C:\&gt; Scissors</span>
<span class="cw">PowerShell chooses...Paper. </span><span class="cg">You win!</span></div>
 <div style="left:8px;top:349px;font-family:'DejaVu Sans Mono',monospace;font-size:11px;line-height:15px;color:#606060;white-space:pre;transform:scaleX(1.208);transform-origin:0 0;">PS C:\&gt;</div>
 <div class="sbtrack" style="left:702px;top:25px;width:16px;height:341px;"></div>
 <svg style="left:706px;top:31px" width="9" height="6" viewBox="0 0 9 6"><path d="M0.5 5 L4.5 0.5 L8.5 5 Z" fill="#555"/></svg>
 <svg style="left:706px;top:355px" width="9" height="6" viewBox="0 0 9 6"><path d="M0.5 1 L4.5 5.5 L8.5 1 Z" fill="#555"/></svg>
 <div class="thumb" style="left:703px;top:42px;width:13px;height:303px;"></div>
 <div style="left:707px;top:190px;width:7px;height:8px;background:repeating-linear-gradient(#6a6a6a 0 1px,#f4f4f4 1px 2px,transparent 2px 3px);"></div>
</div>
</body></html>
